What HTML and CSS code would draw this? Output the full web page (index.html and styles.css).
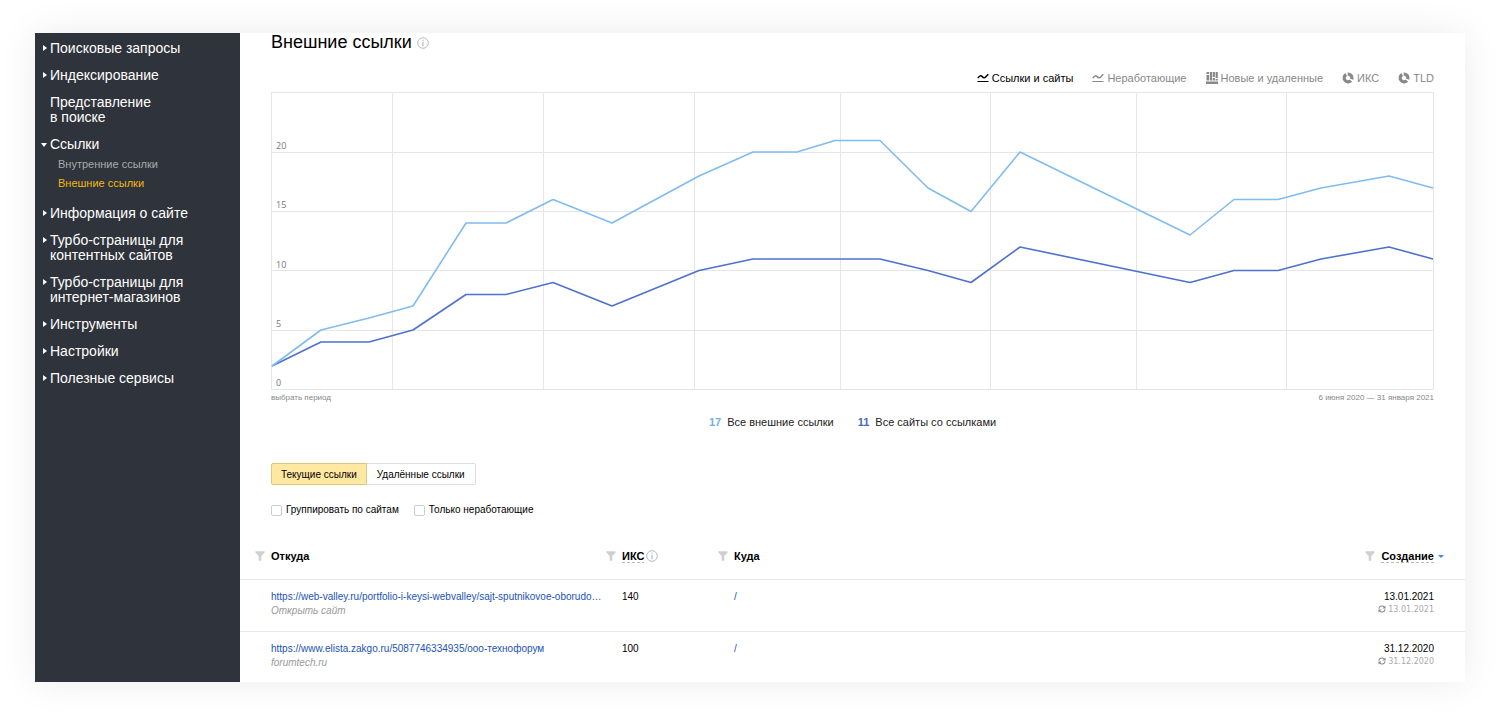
FILE: index.html
```html
<!DOCTYPE html>
<html lang="ru">
<head>
<meta charset="utf-8">
<title>Внешние ссылки</title>
<link rel="stylesheet" href="styles.css">
</head>
<body>
<svg class="sprite" aria-hidden="true">
  <symbol id="i-line" viewBox="0 0 12 12"><path d="M.8 6.200C2.500 3.600 3.800 3.200 5.200 4.600S7.500 6.200 8.600 5L11.300 2.300" fill="none" stroke="currentColor" stroke-width="1.500"/><path d="M.5 9.500h11" stroke="currentColor"/></symbol>
  <symbol id="i-bars" viewBox="0 0 12 12"><path d="M.5 3h2.500v5.500H.5zM.5 0h2.500v2H.5zM3.800 0h2.200v8.500H3.800zM6.700 0h2.200v5H6.700zM6.700 6h2.200v2.500H6.700zM9.600 0h2.200v6H9.600zM9.600 7h2.200v1.500H9.600zM0 9.500h12v2.500H0z" fill="currentColor"/></symbol>
  <symbol id="i-pie" viewBox="0 0 12 12"><g fill="none" stroke="currentColor" stroke-width="3.200"><path d="M4.200 2.500A3.900 3.900 0 1 0 8.900 8.600"/><path d="M5.700 2.100A3.900 3.900 0 0 1 9.700 7.200"/></g></symbol>
  <symbol id="i-info" viewBox="0 0 12 12"><circle cx="6" cy="6" r="5.300" fill="none" stroke="currentColor"/><path d="M5.400 2.800h1.200v1.300H5.400zM5.400 5h1.200v4.200H5.400z" fill="currentColor"/></symbol>
  <symbol id="i-filter" viewBox="0 0 10 10"><path d="M.5.300h9v1.500L6.300 5v4.700H3.700V5L.5 1.800z" fill="currentColor"/></symbol>
  <symbol id="i-sync" viewBox="0 0 8 8"><path d="M.9 3.700A3 3 0 0 1 6.300 2.200M7.100 4.300A3 3 0 0 1 1.700 5.800" fill="none" stroke="currentColor" stroke-width="1.100"/><path d="M7.500.5v3h-3zM.5 7.500v-3h3z" fill="currentColor"/></symbol>
</svg>
<div class="card">
  <nav class="side">
    <ul class="menu">
      <li><a class="item closed" href="#">Поисковые запросы</a></li>
      <li><a class="item closed" href="#">Индексирование</a></li>
      <li><a class="item" href="#">Представление<br>в поиске</a></li>
      <li><a class="item open" href="#">Ссылки</a>
        <ul class="submenu">
          <li><a href="#">Внутренние ссылки</a></li>
          <li><a class="current" href="#">Внешние ссылки</a></li>
        </ul>
      </li>
      <li><a class="item closed" href="#">Информация о сайте</a></li>
      <li><a class="item closed" href="#">Турбо-страницы для<br>контентных сайтов</a></li>
      <li><a class="item closed" href="#">Турбо-страницы для<br>интернет-магазинов</a></li>
      <li><a class="item closed" href="#">Инструменты</a></li>
      <li><a class="item closed" href="#">Настройки</a></li>
      <li><a class="item closed" href="#">Полезные сервисы</a></li>
    </ul>
  </nav>
  <main class="main">
    <div class="report">
      <h1 class="title">Внешние ссылки <svg class="ic info"><use href="#i-info"/></svg></h1>
      <div class="tabs">
        <button class="tab active" type="button"><svg class="ic"><use href="#i-line"/></svg>Ссылки и сайты</button>
        <button class="tab" type="button"><svg class="ic"><use href="#i-line"/></svg>Неработающие</button>
        <button class="tab" type="button"><svg class="ic"><use href="#i-bars"/></svg>Новые и удаленные</button>
        <button class="tab" type="button"><svg class="ic"><use href="#i-pie"/></svg>ИКС</button>
        <button class="tab" type="button"><svg class="ic"><use href="#i-pie"/></svg>TLD</button>
      </div>
      <div class="chart">
        <svg class="plot" viewBox="0 0 1163 298" preserveAspectRatio="none">
          <path class="grid" d="M0 60.500H1163M0 119.500H1163M0 178.500H1163M0 238.500H1163M121.500 0V298M272.500 0V298M423.500 0V298M569.500 0V298M719.500 0V298M865.500 0V298M1015.500 0V298"/>
          <rect class="grid" x=".5" y=".5" width="1162" height="297"/>
          <polyline class="sites" points="1,274 50,250 98,250 142,238 195,202.500 235,202.500 282,190.500 341,214 428,178.500 482,167 609,167 657,178.500 700,190.500 749,155 919,190.500 963,178.500 1007,178.500 1050,167 1118,155 1162,167"/>
          <polyline class="links" points="1,274 50,238 98,226 142,214 195,131 235,131 282,107.500 341,131 428,84 482,60 526,60 564,48.500 609,48.500 657,96 700,119.500 749,60 919,143 963,107.500 1007,107.500 1050,96 1118,84 1162,96"/>
        </svg>
        <div class="scale"><span>20</span><span>15</span><span>10</span><span>5</span><span>0</span></div>
      </div>
      <div class="period"><a href="#">выбрать период</a><span>6 июня 2020 — 31 января 2021</span></div>
      <div class="legend">
        <span class="key"><b class="light">17</b>Все внешние ссылки</span>
        <span class="key"><b class="dark">11</b>Все сайты со ссылками</span>
      </div>
      <div class="switch">
        <button class="on" type="button">Текущие ссылки</button><button type="button">Удалённые ссылки</button>
      </div>
      <div class="options">
        <label class="check"><input type="checkbox">Группировать по сайтам</label>
        <label class="check"><input type="checkbox">Только неработающие</label>
      </div>
    </div>
    <table class="table">
      <thead>
        <tr>
          <th class="from"><span class="head"><svg class="ic filter"><use href="#i-filter"/></svg>Откуда</span></th>
          <th class="iks"><span class="head"><svg class="ic filter"><use href="#i-filter"/></svg><span class="sort">ИКС</span><svg class="ic hint"><use href="#i-info"/></svg></span></th>
          <th><span class="head"><svg class="ic filter"><use href="#i-filter"/></svg>Куда</span></th>
          <th class="date"><span class="head"><svg class="ic filter"><use href="#i-filter"/></svg><span class="sort">Создание</span><i class="desc"></i></span></th>
        </tr>
      </thead>
      <tbody>
        <tr>
          <td><a class="url" href="#">https://web-valley.ru/portfolio-i-keysi-webvalley/sajt-sputnikovoe-oborudo…</a><em>Открыть сайт</em></td>
          <td>140</td>
          <td><a href="#">/</a></td>
          <td class="date">13.01.2021<span class="synced"><svg class="ic"><use href="#i-sync"/></svg>13.01.2021</span></td>
        </tr>
        <tr>
          <td><a class="url" href="#">https://www.elista.zakgo.ru/5087746334935/ооо-технофорум</a><em>forumtech.ru</em></td>
          <td>100</td>
          <td><a href="#">/</a></td>
          <td class="date">31.12.2020<span class="synced"><svg class="ic"><use href="#i-sync"/></svg>31.12.2020</span></td>
        </tr>
      </tbody>
    </table>
  </main>
</div>
</body>
</html>
```
FILE: styles.css
```css
* { box-sizing: border-box; }
body { margin: 0; padding: 33px 35px 38px; background: #fff; color: #000; font-family: "Liberation Sans", Arial, sans-serif; font-size: 11px; }
a { color: inherit; text-decoration: none; }
button { font: inherit; color: inherit; background: none; border: 0; margin: 0; padding: 0; }
.sprite { display: none; }
.ic { flex: none; width: 12px; height: 12px; }

.card { display: flex; background: #fff; box-shadow: 0 0 36px rgba(0, 0, 0, .08); }

.side { flex: none; width: 205px; padding: 8px 8px 0; background: #2f333b; }
.menu, .submenu { list-style: none; margin: 0; padding: 0; }
.menu { display: flex; flex-direction: column; gap: 12px; }
.item { display: block; position: relative; padding-left: 7px; color: #fff; font-size: 14px; line-height: 15px; }
.item::before { position: absolute; border: solid transparent; }
.closed::before { content: ""; left: 0; top: 4px; border-width: 3px 0 3px 4px; border-left-color: #fff; }
.open::before { content: ""; left: -2px; top: 6px; border-width: 4px 3px 0; border-top-color: #fff; }
.submenu { padding: 3px 0 1px 15px; color: #a9abaf; line-height: 19px; }
.submenu .current { color: #f2b90c; }

.main { flex: 1; min-width: 0; }
.report { padding: 0 31px; }
.title { display: flex; align-items: center; gap: 5px; margin: 0; font-size: 18px; font-weight: 400; line-height: 19px; }
.info, .hint { color: #bbb; }

.tabs { display: flex; justify-content: flex-end; gap: 19px; padding: 19px 0 7px; color: #888; line-height: 14px; }
.tab { display: flex; align-items: center; gap: 3px; }
.active { color: #000; }

.chart { display: grid; height: 298px; }
.plot, .scale { grid-area: 1 / 1; width: 100%; height: 100%; }
.plot { display: block; }
.plot > * { fill: none; vector-effect: non-scaling-stroke; }
.grid { stroke: #e6e6e6; }
.links, .sites { stroke-width: 1.600; stroke-linejoin: round; }
.links { stroke: #80bcee; }
.sites { stroke: #4e71cd; }
.scale { display: flex; flex-direction: column; justify-content: space-between; padding: 48px 5px 1px; color: #777; font-family: "Open Sans", sans-serif; font-size: 9px; line-height: 12px; }

.period { display: flex; justify-content: space-between; color: #888; font-size: 8px; line-height: 16px; }
.legend { display: flex; justify-content: center; gap: 24px; padding: 8px 0 9px; font-size: 11px; line-height: 16px; color: #222; }
.key { display: flex; gap: 6px; }
.light { color: #6fb0e6; }
.dark { color: #4668c5; }

.switch { display: flex; width: fit-content; margin-top: 24px; }
.switch button { height: 22px; padding: 0 10px; border: 1px solid #ddd; border-left: 0; border-radius: 0 2px 2px 0; font-size: 10px; }
.switch .on { padding: 0 9px; border: 1px solid #dfc781; border-radius: 2px 0 0 2px; background: #ffe9a2; }
.options { display: flex; gap: 15px; padding: 18px 0 16px; font-size: 10px; line-height: 14px; }
.check { display: flex; align-items: center; gap: 4px; }
.check input { appearance: none; width: 11px; height: 11px; margin: 0; border: 1px solid #ccc; border-radius: 2px; background: #fff; }

.table { width: 100%; table-layout: fixed; border-collapse: collapse; }
th, td { padding: 0; text-align: left; font-weight: 400; vertical-align: top; }
th:first-child, td:first-child { padding-left: 31px; }
th.from { width: 382px; }
th.iks { width: 112px; }
th { height: 46px; padding-top: 16px; font-size: 11px; font-weight: 700; line-height: 14px; }
.head { display: inline-flex; align-items: center; height: 14px; margin-left: -16px; }
.filter { width: 10px; height: 10px; margin-right: 6px; color: #d0d0d0; }
.hint { margin-left: 2px; }
.sort { background: linear-gradient(90deg, #bbb 60%, transparent 0) 0 100% / 5px 1px repeat-x; }
.desc { margin-left: 4px; border: solid transparent; border-width: 3px 3px 0; border-top-color: #3a8ee0; }
.table .date { width: 160px; padding-right: 31px; text-align: right; }
.date .head { margin-right: -10px; }
td { height: 52px; padding-top: 9px; border-top: 1px solid #e8e8e8; font-size: 10px; line-height: 15px; }
tr:last-child td { height: 51px; }
td a { color: #2253b5; }
.url { display: block; white-space: nowrap; }
td em { display: block; color: #999; line-height: 13px; }
.synced { display: flex; justify-content: flex-end; align-items: center; gap: 2px; color: #aaa; font-family: "DejaVu Sans", sans-serif; font-size: 8px; line-height: 11px; }
.synced .ic { width: 8px; height: 8px; color: #888; }
```
